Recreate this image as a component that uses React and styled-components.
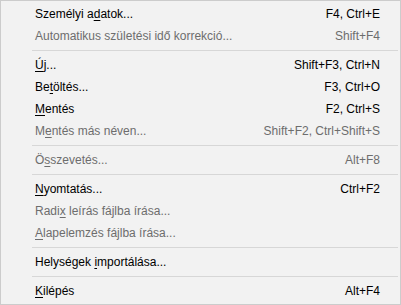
import React from "react";
import styled, { createGlobalStyle } from "styled-components";

const GlobalStyle = createGlobalStyle`
  html, body {
    margin: 0;
    padding: 0;
    background: #f0f0f0;
  }
`;

const Menu = styled.div`
  box-sizing: border-box;
  width: 401px;
  height: 305px;
  padding: 2px 0;
  background: #f2f2f2;
  border: 1px solid #cccccc;
  font-family: "Segoe UI", "Liberation Sans", Arial, sans-serif;
  font-size: 12px;
  display: flex;
  flex-direction: column;
`;

const Item = styled.div`
  height: 22px;
  display: flex;
  align-items: center;
  justify-content: space-between;
  padding: 0 20px 0 34px;
  color: ${(p) => (p.disabled ? "#6d6d6d" : "#000000")};
  white-space: nowrap;
`;

const Shortcut = styled.span`
  color: inherit;
`;

const Key = styled.span`
  text-decoration: underline;
  text-underline-offset: 2px;
`;

const Separator = styled.div`
  height: 1px;
  margin: 3px 2px 3px 31px;
  background: #d7d7d7;
`;

const items = [
  { label: "Személyi adatok...", key: 10, shortcut: "F4, Ctrl+E" },
  { label: "Automatikus születési idő korrekció...", shortcut: "Shift+F4", disabled: true },
  "sep",
  { label: "Új...", key: 0, shortcut: "Shift+F3, Ctrl+N" },
  { label: "Betöltés...", key: 2, shortcut: "F3, Ctrl+O" },
  { label: "Mentés", key: 0, shortcut: "F2, Ctrl+S" },
  { label: "Mentés más néven...", key: 1, shortcut: "Shift+F2, Ctrl+Shift+S", disabled: true },
  "sep",
  { label: "Összevetés...", key: 1, shortcut: "Alt+F8", disabled: true },
  "sep",
  { label: "Nyomtatás...", key: 0, shortcut: "Ctrl+F2" },
  { label: "Radix leírás fájlba írása...", key: 4, disabled: true },
  { label: "Alapelemzés fájlba írása...", key: 0, disabled: true },
  "sep",
  { label: "Helységek importálása...", key: 10 },
  "sep",
  { label: "Kilépés", key: 0, shortcut: "Alt+F4" },
];

const Label = ({ text, k }) => {
  if (k === undefined) return <span>{text}</span>;
  return (
    <span>
      {text.slice(0, k)}
      <Key>{text[k]}</Key>
      {text.slice(k + 1)}
    </span>
  );
};

export default function App() {
  return (
    <>
      <GlobalStyle />
      <Menu>
        {items.map((it, i) =>
          it === "sep" ? (
            <Separator key={i} />
          ) : (
            <Item key={i} disabled={it.disabled}>
              <Label text={it.label} k={it.key} />
              {it.shortcut && <Shortcut>{it.shortcut}</Shortcut>}
            </Item>
          )
        )}
      </Menu>
    </>
  );
}
